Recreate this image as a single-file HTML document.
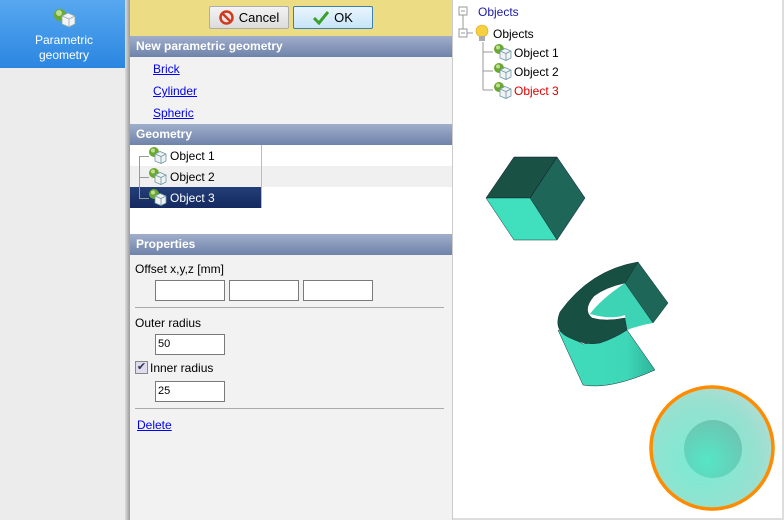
<!DOCTYPE html>
<html><head><style>
*{margin:0;padding:0;box-sizing:border-box}
body{width:784px;height:520px;overflow:hidden;background:#fff;font-family:"Liberation Sans",sans-serif;font-size:12px;position:relative}
.a{position:absolute}
.hdr{position:absolute;left:130px;width:322px;height:21px;background:linear-gradient(#a0aecb,#6f83aa);color:#fff;font-weight:bold;font-size:12px;padding:3px 0 0 6px}
.lnk{position:absolute;color:#00e;text-decoration:underline;font-size:12px}
.inp{position:absolute;width:70px;height:21px;background:#fff;border:1px solid #7a7a7a;font-size:11px;padding:3px 2px}
.lbl{position:absolute;font-size:12px;color:#000}
.btn{position:absolute;top:6px;height:23px;width:80px;border:1px solid #adadad;border-radius:2px;font-size:13px;display:flex;align-items:center;justify-content:center;gap:5px}
</style></head><body>
<!-- sidebar -->
<div class="a" style="left:0;top:0;width:128px;height:520px;background:#ececec"></div>
<div class="a" style="left:0;top:0;width:128px;height:68px;background:linear-gradient(#57a8f0,#2b86e0);color:#fff;text-align:center;font-size:12px;line-height:15px;padding-top:33px">Parametric<br>geometry</div>
<svg class="a" style="left:52px;top:8px" width="26" height="20"><circle cx="8" cy="7" r="6" fill="#6aa830"/><circle cx="7" cy="5" r="3" fill="#bfe08a"/><path d="M10 8l6-3 7 3v8l-6 3-7-3z" fill="#f4f4f4" stroke="#8aa" stroke-width=".8"/><path d="M10 8l7 3 6-3M17 11v8" stroke="#9ab" stroke-width=".8" fill="none"/></svg>
<div class="a" style="left:125px;top:0;width:5px;height:520px;background:linear-gradient(90deg,#ddd,#9a9a9a)"></div>
<!-- panel -->
<div class="a" style="left:130px;top:0;width:322px;height:520px;background:#f2f2f2"></div>
<div class="a" style="left:130px;top:0;width:322px;height:36px;background:#ecdc84"></div>
<div class="btn" style="left:209px;background:linear-gradient(#f3f3f3,#dcdcdc)"><svg width="15" height="15"><circle cx="7.5" cy="7.5" r="6" fill="none" stroke="#d23a1e" stroke-width="2.5"/><path d="M3.5 3.5l8 8" stroke="#d23a1e" stroke-width="2.5"/></svg>Cancel</div>
<div class="btn" style="left:293px;background:linear-gradient(#eaf5fd,#c6e4f8);border-color:#3c7fb1"><svg width="16" height="14"><path d="M1 7l5 5 9-11" fill="none" stroke="#3aa02a" stroke-width="3"/></svg>OK</div>
<div class="hdr" style="top:36px">New parametric geometry</div>
<a class="lnk" style="left:153px;top:62px">Brick</a>
<a class="lnk" style="left:153px;top:84px">Cylinder</a>
<a class="lnk" style="left:153px;top:106px">Spheric</a>
<div class="hdr" style="top:124px">Geometry</div>
<div class="a" style="left:130px;top:145px;width:322px;height:89px;background:#fff"></div>
<div class="a" style="left:130px;top:166px;width:322px;height:21px;background:#f0f0f0"></div>
<div class="a" style="left:130px;top:187px;width:131px;height:21px;background:linear-gradient(#243e78,#142a60)"></div>
<div class="a" style="left:261px;top:145px;width:1px;height:63px;background:#bbb"></div>
<div class="a" style="left:139px;top:156px;width:1px;height:42px;background:#999"></div>
<div class="a" style="left:139px;top:156px;width:10px;height:1px;background:#999"></div>
<div class="a" style="left:139px;top:177px;width:10px;height:1px;background:#999"></div>
<div class="a" style="left:139px;top:198px;width:10px;height:1px;background:#999"></div>
<div class="lbl" style="left:170px;top:149px">Object 1</div>
<div class="lbl" style="left:170px;top:170px">Object 2</div>
<div class="lbl" style="left:170px;top:191px;color:#fff">Object 3</div>
<div class="hdr" style="top:234px">Properties</div>
<div class="lbl" style="left:135px;top:262px">Offset x,y,z [mm]</div>
<div class="inp" style="left:155px;top:280px"></div>
<div class="inp" style="left:229px;top:280px"></div>
<div class="inp" style="left:303px;top:280px"></div>
<div class="a" style="left:135px;top:307px;width:309px;height:1px;background:#aaa"></div>
<div class="lbl" style="left:135px;top:316px">Outer radius</div>
<div class="inp" style="left:155px;top:334px">50</div>
<div class="a" style="left:135px;top:361px;width:13px;height:13px;border:1px solid #888;background:#dde;font-size:11px;line-height:11px;text-align:center;color:#335">✔</div>
<div class="lbl" style="left:150px;top:361px">Inner radius</div>
<div class="inp" style="left:155px;top:381px">25</div>
<div class="a" style="left:135px;top:408px;width:309px;height:1px;background:#aaa"></div>
<a class="lnk" style="left:137px;top:418px">Delete</a>
<div class="a" style="left:452px;top:0;width:1px;height:520px;background:#ccc"></div>
<div class="a" style="left:453px;top:518px;width:331px;height:2px;background:#ddd"></div>
<div class="a" style="left:782px;top:0;width:2px;height:520px;background:#ddd"></div>
<svg class="a" style="left:0;top:0" width="784" height="520">
<defs>
<radialGradient id="sg" cx="0.4" cy="0.6" r="0.7"><stop offset="0" stop-color="#78ecd4"/><stop offset="0.7" stop-color="#98e0cf"/><stop offset="1" stop-color="#b8dcd6"/></radialGradient>
<radialGradient id="ig" cx="0.4" cy="0.7" r="0.7"><stop offset="0" stop-color="#55e6c6"/><stop offset="1" stop-color="#6cc6b2"/></radialGradient>
<linearGradient id="cg" x1="0" x2="1"><stop offset="0" stop-color="#40dcbc"/><stop offset="0.7" stop-color="#3ed8b8"/><stop offset="1" stop-color="#2eb49a"/></linearGradient>
<g id="ic"><circle cx="6" cy="6" r="5" fill="#6aa830"/><circle cx="5" cy="4.5" r="2" fill="#c0e090"/><path d="M7 8l5-2.5 6 2.5v7l-5 2.5-6-2.5z" fill="#f2f2f2" stroke="#6a9aa8" stroke-width=".8"/><path d="M7 8l6 2.5 5-2.5M13 10.5v7" stroke="#6a9aa8" stroke-width=".8" fill="none"/></g>
</defs>
<g fill="none" stroke="#999">
<rect x="459" y="7" width="8" height="8" fill="#fff"/><path d="M461 11h4M463 15v14"/>
<rect x="459" y="29" width="8" height="8" fill="#fff"/><path d="M461 33h4M467 33h6M483 42v48M483 52h10M483 71h10M483 90h10"/>
</g>
<text x="478" y="16" font-size="12" fill="#1a1aa8" font-family="Liberation Sans">Objects</text>
<circle cx="482" cy="31" r="6" fill="#f7d040" stroke="#d8a820" stroke-width=".6"/><rect x="479" y="36" width="6" height="5" fill="#aaa"/>
<text x="493" y="38" font-size="12" fill="#000" font-family="Liberation Sans">Objects</text>
<text x="514" y="57" font-size="12" fill="#000" font-family="Liberation Sans">Object 1</text>
<text x="514" y="76" font-size="12" fill="#000" font-family="Liberation Sans">Object 2</text>
<text x="514" y="95" font-size="12" fill="#d00" font-family="Liberation Sans">Object 3</text>
<use href="#ic" x="148" y="146"/><use href="#ic" x="148" y="167"/><use href="#ic" x="148" y="188"/>
<use href="#ic" x="493" y="43"/><use href="#ic" x="493" y="62"/><use href="#ic" x="493" y="81"/>
<!-- cube -->
<path d="M514 157L557 157L530 198L486 198Z" fill="#195245" stroke="#113" stroke-width=".5"/>
<path d="M557 157L585 198L557 240L530 198Z" fill="#1d6658" stroke="#113" stroke-width=".5"/>
<path d="M486 198L530 198L557 240L514 240Z" fill="#40dfbe" stroke="#133" stroke-width=".5"/>
<!-- C shape -->
<path d="M558 330L583 385Q610 390 655 370L627 330Q605 343 583 344Z" fill="url(#cg)" stroke="#133" stroke-width=".5"/>
<path d="M625 283L653 323Q640 325 627 330L625 315Q612 320 590 314Q600 300 625 283Z" fill="#3cd4b4"/>
<path d="M638 262Q590 270 560 312Q553 330 568 337Q585 346 600 343Q615 338 627 330L625 318Q605 322 592 318Q582 310 594 296Q606 287 625 283Z" fill="#174f43" stroke="#133" stroke-width=".5"/>
<path d="M638 262L668 303L653 323L625 283Z" fill="#1d6658" stroke="#133" stroke-width=".5"/>
<!-- sphere -->
<circle cx="712" cy="448" r="61" fill="url(#sg)" stroke="#ff8c00" stroke-width="3.5"/>
<circle cx="713" cy="449" r="29" fill="url(#ig)"/>
</svg>
</body></html>
